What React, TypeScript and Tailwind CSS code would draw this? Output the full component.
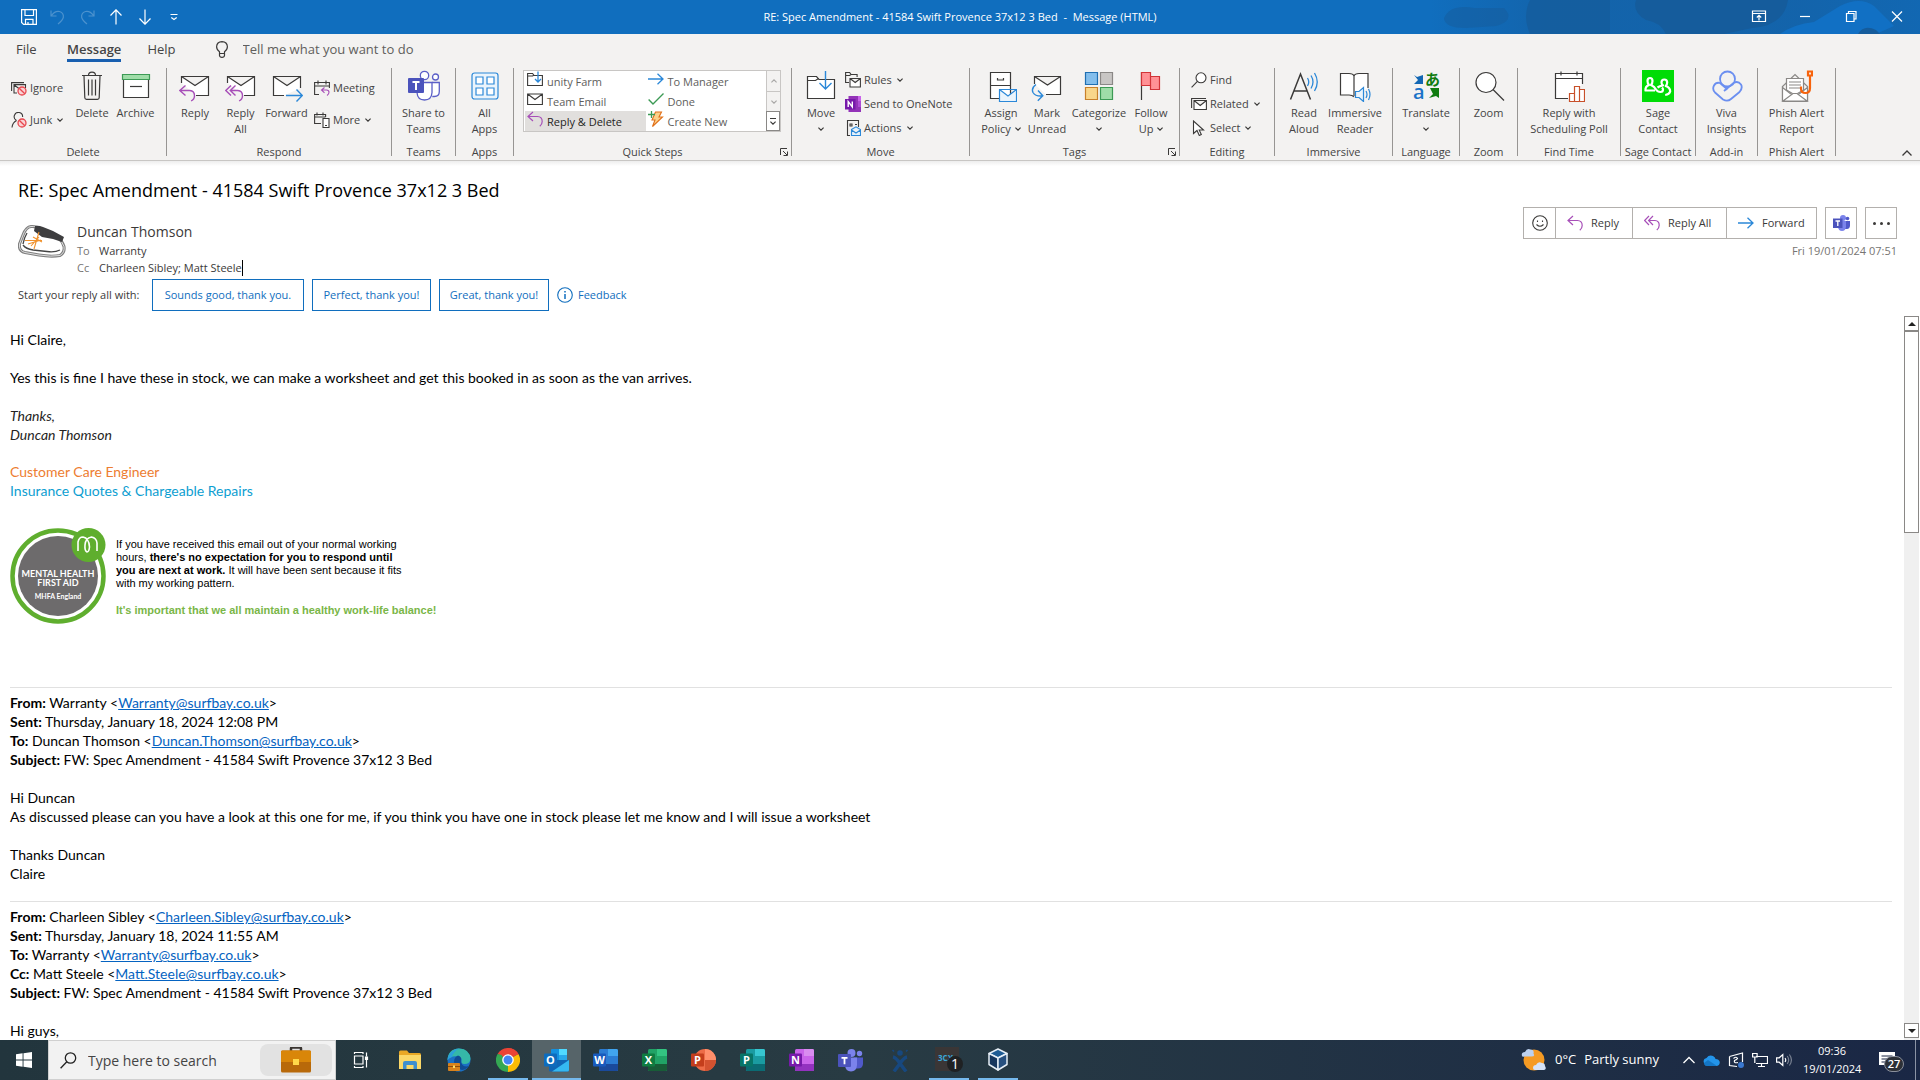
import type { ReactNode } from "react";

/* ---------- shared bits ---------- */

const INK = "#3b3a39";
const BLUE = "#2b88d8";
const PURPLE = "#a74fb8";

function Chevron({ className = "" }: { className?: string }) {
  return (
    <svg width="6" height="4" viewBox="0 0 6 4" className={className} fill="none" stroke={INK} strokeWidth="1.2">
      <path d="M0.4 0.6 3 3.1 5.6 0.6" />
    </svg>
  );
}

function Icon32({ children }: { children: ReactNode }) {
  return (
    <svg width="32" height="32" viewBox="0 0 32 32" fill="none" stroke={INK} strokeWidth="1.2" className="shrink-0">
      {children}
    </svg>
  );
}

function Icon16({ children }: { children: ReactNode }) {
  return (
    <svg width="16" height="16" viewBox="0 0 16 16" fill="none" stroke={INK} strokeWidth="1.1" className="shrink-0">
      {children}
    </svg>
  );
}

function NoSign({ x, y, r }: { x: number; y: number; r: number }) {
  return (
    <g stroke="#e8484f" strokeWidth="1.3">
      <circle cx={x} cy={y} r={r} fill="#f9d3d5" />
      <path d={`M${x - r * 0.7} ${y - r * 0.7} L${x + r * 0.7} ${y + r * 0.7}`} />
    </g>
  );
}

/* ---------- ribbon icons ---------- */

const IgnoreIcon = () => (
  <Icon16>
    <path d="M0.6 11V2.6H13" />
    <path d="M6 13H3V4.6h11.5V8M3.2 5l5.4 4 2-1.4" fill="none" />
    <NoSign x={11} y={11} r={4} />
  </Icon16>
);

const JunkIcon = () => (
  <Icon16>
    <path d="M5.5 8.4A4.2 4.2 0 1 1 11.6 5M1 15.5c.3-3.4 1.8-5.6 4.6-7" />
    <NoSign x={11} y={11} r={4} />
  </Icon16>
);

const TrashIcon = () => (
  <Icon32>
    <path d="M6 5.5h20M12.5 5.3c0-2.4 1-3.2 3.5-3.2s3.5.8 3.5 3.2M8 5.8l.8 22q.1 1.6 1.7 1.6h11q1.6 0 1.7-1.6l.8-22M12.5 9.5v16M16 9.5v16M19.5 9.5v16" />
  </Icon32>
);

const ArchiveIcon = () => (
  <Icon32>
    <path d="M3.5 9.5h25v18h-25z" fill="#fff" />
    <path d="M2.5 4.5h27v5h-27z" fill="#9fdda8" stroke="#3c9a55" />
    <path d="M10 16.5h12" />
  </Icon32>
);

const ReplyBigIcon = () => (
  <Icon32>
    <path d="M2.5 13V6.500h27v19H17M2.5 6.500 16 15.500l13.500-9" fill="#fff" />
    <path d="M6.500 15.500.8 20.500l5.700 5M.8 20.500h10q4.700.3 4.700 5.200 0 3.500-3.400 5.300" stroke={PURPLE} strokeWidth="1.4" />
  </Icon32>
);

const ReplyAllBigIcon = () => (
  <Icon32>
    <path d="M2.5 13V6.500h27v19H19M2.5 6.500 16 15.500l13.500-9" fill="#fff" />
    <path d="M6 15.500.8 20.500l5.200 5M10.500 15.500l-5.200 5 5.200 5M5.300 20.500h7.500q4.700.3 4.700 5.200 0 3.500-3.400 5.300" stroke={PURPLE} strokeWidth="1.4" />
  </Icon32>
);

const ForwardBigIcon = () => (
  <Icon32>
    <path d="M13 25.500H2.500v-19h27V18M2.500 6.500 16 15.500l13.500-9" fill="#fff" />
    <path d="M15 25.500h16M25.500 19.500l5.800 6-5.800 6" stroke={BLUE} strokeWidth="1.4" />
  </Icon32>
);

const MeetingIcon = () => (
  <Icon16>
    <path d="M5 14.500H.6v-12h14.800V8M.6 6h14.800M4 .5v4M12 .5v4" />
    <path d="M10.500 7.500 7.500 10l3 2.800M7.500 10h5q2.500 0 2.500 2.300 0 2-2 3.200" stroke={PURPLE} />
  </Icon16>
);

const MoreIcon = () => (
  <Icon16>
    <path d="M7 11.500H.6v-9h11V5M.6 5h11M3 .5v3M9 .5v3" />
    <path d="M9 6.500h6v9H9zM11 13.500h2" fill="#fff" />
  </Icon16>
);

const TeamsBigIcon = () => (
  <Icon32>
    <g stroke="#5b5fc7" strokeWidth="1.3">
      <circle cx="16.5" cy="5.5" r="4.2" fill="#fff" />
      <circle cx="27.5" cy="7" r="3" fill="#fff" />
      <path d="M24 12.500h7.300v9q0 5-5 5h-2" fill="#fff" />
      <path d="M9 12.500h15v10q-.5 7.500-7.500 7.500T9 22.500z" fill="#fff" />
    </g>
    <rect x="0" y="8" width="16" height="15" rx="1" fill="#4b53bc" stroke="none" />
    <path d="M4.500 12h7M8 12v8" stroke="#fff" strokeWidth="2" />
  </Icon32>
);

const AppsIcon = () => (
  <Icon32>
    <g stroke={BLUE}>
      <rect x="3" y="3" width="26" height="26" rx="2.5" fill="#eaf4fc" />
      <path d="M7 7h7v7H7zM18 7h7v7h-7zM7 18h7v7H7zM18 18h7v7h-7z" fill="#fff" />
    </g>
  </Icon32>
);

const FolderMoveIcon = () => (
  <Icon32>
    <path d="M2.500 28.500v-22h9l2.500 3h15.500v19z" fill="#fff" />
    <path d="M2.500 10.500h8l3-2" />
    <path d="M20.500 1v17.500M14.500 13l6 6 6-6" stroke={BLUE} strokeWidth="1.4" />
  </Icon32>
);

const FolderSmallIcon = () => (
  <Icon16>
    <path d="M.6 14.500v-12h5l1.500 2h8.300v10zM.6 5h5l1.500-1" fill="#fff" />
    <path d="M11 .5v10M8 8l3 3 3-3" stroke={BLUE} strokeWidth="1.3" />
  </Icon16>
);

const EnvelopeSmallIcon = () => (
  <Icon16>
    <path d="M.6 3h14.800v10.500H.6zM.6 3 8 8.500 15.400 3" fill="#fff" />
  </Icon16>
);

function ReplyGlyph() {
  return (
    <svg width="16" height="16" viewBox="0 0 16 16" fill="none" stroke={PURPLE} strokeWidth="1.2" className="shrink-0">
      <path d="M6 1 1 5.500l5 4.500M1 5.500h9.500q4.700.2 4.700 5 0 2.800-2.400 4.700" />
    </svg>
  );
}

function ReplyAllGlyph() {
  return (
    <svg width="16" height="16" viewBox="0 0 16 16" fill="none" stroke={PURPLE} strokeWidth="1.2" className="shrink-0">
      <path d="M5 1 .6 5.500 5 10M9 1 4.600 5.500 9 10M4.600 5.500H11q4.200.2 4.200 4.800 0 2.800-2.400 4.700" />
    </svg>
  );
}

function ArrowGlyph() {
  return (
    <svg width="16" height="16" viewBox="0 0 16 16" fill="none" stroke={BLUE} strokeWidth="1.3" className="shrink-0">
      <path d="M0 8h15M9.500 2.800 15 8l-5.500 5.200" />
    </svg>
  );
}

const CheckIcon = () => (
  <Icon16>
    <path d="M.6 8.500 5 13 15.500 2.500" stroke="#3c9a55" strokeWidth="1.4" />
  </Icon16>
);

const BoltIcon = () => (
  <Icon16>
    <path d="M7.500 1h6L11 6h3.500L4.500 15.500 7 9H4z" fill="#fbd18a" stroke="#e0701a" />
    <path d="M3.500 0v7M0 3.500h7" stroke="#3c9a55" strokeWidth="1.3" />
  </Icon16>
);

const RulesIcon = () => (
  <Icon16>
    <path d="M4 10.500H.6v-10h4l1.500 2h6V5M.6 3.500h4l1.500-1" />
    <path d="M5 6.500h10.400v8.500H5zM5 6.500l5.200 4 5.200-4" fill="#fff" />
  </Icon16>
);

const OneNoteIcon = () => (
  <svg width="16" height="16" viewBox="0 0 16 16" className="shrink-0">
    <path d="M3.500 0H16v16H3.500z" fill="#9333b8" />
    <path d="M13 0h3v5h-3z" fill="#ca64ea" />
    <path d="M13 5h3v6h-3z" fill="#ae4bd5" />
    <path d="M0 3h10.500v10.500H0z" fill="#7719aa" />
    <path d="M3.200 11V5.500L7.300 11V5.500" fill="none" stroke="#fff" strokeWidth="1.4" />
  </svg>
);

const ActionsIcon = () => (
  <Icon16>
    <path d="M5 15.500H2.500V.5h11V7M5 4h2v2H5zM10 4.500h2" />
    <path d="M6.500 9.500 11 6.800l4.500 2.700v6h-9zM6.500 10l4.500 3 4.500-3" fill="#e3f1fc" stroke={BLUE} />
  </Icon16>
);

const AssignIcon = () => (
  <Icon32>
    <path d="M5.500 2.500h20v26h-20zM5.500 15.500h20M12.500 8v2h6V8" fill="#fff" />
    <path d="M14.500 19.500h17v12h-17zM14.500 19.500 23 26l8.500-6.500" fill="#eaf4fc" stroke={BLUE} />
  </Icon32>
);

const UnreadIcon = () => (
  <Icon32>
    <path d="M3.500 14V6.500h26v18H15M3.500 6.500 16.500 15l13-8.500" fill="#fff" />
    <path d="M5 14.500q-5 3.500-3 8 2.500 4 9 3.500M7 20.500l4.800 5.300-5 5" stroke={BLUE} strokeWidth="1.4" />
  </Icon32>
);

const CategorizeIcon = () => (
  <Icon32>
    <path d="M2.500 2.500h12v12h-12z" fill="#83beec" stroke="#1f6fb2" />
    <path d="M17.500 2.500h12v12h-12z" fill="#c8c6c4" stroke="#8a8886" />
    <path d="M2.500 17.500h12v12h-12z" fill="#f9d68a" stroke="#c8802a" />
    <path d="M17.500 17.500h12v12h-12z" fill="#9fdda8" stroke="#3c9a55" />
  </Icon32>
);

const FlagIcon = () => (
  <Icon32>
    <path d="M6.500 2v28" />
    <path d="M6.500 2.500h9v4h9v13h-9v-4h-9z" fill="#ff9195" stroke="#d13438" />
    <path d="M15.500 6.500v9" stroke="#d13438" />
  </Icon32>
);

const FindIcon = () => (
  <Icon16>
    <circle cx="10" cy="5.8" r="5" fill="#fff" />
    <path d="M6.400 9.400.6 15.300" />
  </Icon16>
);

const RelatedIcon = () => (
  <Icon16>
    <path d="M.6 12V2.500H15" />
    <path d="M3 4.500h12.400V13.500H3zM3 4.500l6.200 5 6.200-5" fill="#fff" />
  </Icon16>
);

const SelectIcon = () => (
  <Icon16>
    <path d="M2.500 1v12.500L6 10.500l2.300 5 2-1L8.200 10H12.500z" fill="#fff" />
  </Icon16>
);

const ReadAloudIcon = () => (
  <Icon32>
    <path d="M2.500 29.500 12.500 4l10 25.500M6 21h13" strokeWidth="1.5" />
    <path d="M19.500 8q2.500 4 0 8M23 5.500q4 6.500 0 13M26.500 3q5.500 9 0 18" stroke={BLUE} strokeWidth="1.3" />
  </Icon32>
);

const ReaderIcon = () => (
  <Icon32>
    <path d="M15 27q-1.500-2-5-2H1.500V3.500H10q4 0 5 2.500 1-2.500 5-2.500h9V18M15 6v20" fill="#fff" />
    <path d="M16.500 21.500h3.500l4.500-4v14l-4.500-4h-3.500z" fill="#eaf4fc" stroke={BLUE} />
    <path d="M27 21q2 3.500 0 7M29.500 19q3 5.500 0 11" stroke={BLUE} />
  </Icon32>
);

const TranslateIcon = () => (
  <svg width="32" height="32" viewBox="0 0 32 32" className="shrink-0 overflow-visible">
    <path d="M4 5l3 2 6-2v9H4l4-4z" fill="#1267b4" />
    <path d="M29 18v10l-3-2-7 2 4-4-3-6z" fill="#107c10" />
    <text x="3" y="29" fontSize="20" fontWeight="600" fill="#1a73c8" fontFamily="'Open Sans', sans-serif">a</text>
    <text x="15" y="15" fontSize="15" fontWeight="700" fill="#107c10" fontFamily="'Noto Sans CJK JP', sans-serif">あ</text>
  </svg>
);

const ZoomIcon = () => (
  <Icon32>
    <circle cx="13" cy="12.5" r="10" fill="#fff" />
    <path d="m20 19.500 11 11" />
  </Icon32>
);

const PollIcon = () => (
  <Icon32>
    <path d="M15 28.500H2.500v-25h27V14M2.500 8.500h27M8 1.500v4M24 1.500v4" fill="#fff" />
    <path d="M16.500 31.500v-8h5v8zM21.500 31.500v-15h5v15zM26.500 31.500v-12h5v12z" fill="#fff" stroke="#c8502a" />
  </Icon32>
);

const SageIcon = () => (
  <svg width="32" height="32" viewBox="0 0 32 32" className="shrink-0" fill="none" stroke="#fff" strokeWidth="2.2" strokeLinejoin="round">
    <rect width="32" height="32" fill="#00dc06" stroke="none" />
    <path d="M13 20.500H3.500q-.5-4 3.500-5.500-1.500-1.500-1.500-4 0-3 2.500-3t2.500 3q0 2.500-1.500 4 3.500 1.500 5 4.500 1.500 2.500 4.500 2.500 2.500 0 2.500-2.500 0-1-1-2" />
    <path d="M15.500 17.500q2-1.500 5.500-2-1.500-1-1.500-3 0-3 2.800-3t2.900 3q0 2-1.500 3.500 4.500 1.500 4.500 5.500-1 3-5 3.500" />
  </svg>
);

const VivaIcon = () => (
  <Icon32>
    <g stroke="#6b8ff0" strokeWidth="1.8">
      <circle cx="16.5" cy="9" r="7.5" />
      <path d="M9 13q-4-1-6 2.500-2 3.800 1 7L12 29.500q4.500 2.500 8-.5l8.500-7q3.500-4 1.500-7.500-3-4-7.500-1.500L13 21M9 13l7.500 6.500" />
    </g>
  </Icon32>
);

const PhishIcon = () => (
  <Icon32>
    <g stroke="#8a8886" fill="#fff">
      <path d="M1.500 31.500v-15L14 4.500l12.500 12v15z" fill="#f3f2f1" />
      <path d="M5.500 20V8.500h17V20L14 25z" />
      <path d="M8 12h12M8 15h12M8 18h12" />
      <path d="M1.500 31.500v-14l9 7M26.500 31.500v-14l-9 7M2 31l10-7.500h4l10 7.500z" />
    </g>
    <path d="M27 1.500h4v4h-4zM29 5.500v12.500q0 5-4.500 5T20 18.500v-2" stroke="#f7630c" strokeWidth="2.2" />
  </Icon32>
);

/* ---------- ribbon building blocks ---------- */

function BigButton({ icon, label, className, chevron = "none" }: {
  icon: ReactNode;
  label: string[];
  className: string;
  chevron?: "none" | "inline" | "below";
}) {
  return (
    <button type="button" className={`flex flex-col items-center pt-0.5 whitespace-nowrap ${className}`}>
      {icon}
      <span className="mt-[3px] text-center leading-4">
        {label.map((line, i) => (
          <span key={line} className="flex items-center justify-center gap-1">
            {line}
            {chevron === "inline" && i === label.length - 1 && <Chevron />}
          </span>
        ))}
        {chevron === "below" && (
          <span className="flex h-4 items-center justify-center"><Chevron /></span>
        )}
      </span>
    </button>
  );
}

function SmallButton({ icon, label, chevron = false, tall = false }: {
  icon: ReactNode;
  label: string;
  chevron?: boolean;
  tall?: boolean;
}) {
  return (
    <button type="button" className={`flex items-center gap-[3px] whitespace-nowrap ${tall ? "h-8" : "h-6"}`}>
      {icon}
      <span>{label}</span>
      {chevron && <Chevron className="ml-0.5" />}
    </button>
  );
}

function Group({ name, width, children, launcher = false }: {
  name: string;
  width: string;
  children: ReactNode;
  launcher?: boolean;
}) {
  return (
    <>
      <section aria-label={name} className={`flex shrink-0 flex-col ${width}`}>
        <div className="flex h-[76px] items-start">{children}</div>
        <div className="relative text-center leading-4 whitespace-nowrap">
          {name}
          {launcher && (
            <button type="button" aria-label={`${name} options`} className="absolute top-1 right-[3px]">
              <svg width="8" height="8" viewBox="0 0 8 8" fill="none" stroke={INK}>
                <path d="M.5 7V.5H7M3 3l4 4M7.500 3.500v4h-4" />
              </svg>
            </button>
          )}
        </div>
      </section>
      <div className="h-[88px] w-px shrink-0 bg-[#979593]" />
    </>
  );
}

function QuickStep({ icon, label, active = false }: { icon: ReactNode; label: string; active?: boolean }) {
  return (
    <button type="button" className={`flex h-5 items-start gap-1 pl-0.5 ${active ? "bg-[#e1dfdd] text-[#252423]" : ""}`}>
      {icon}
      <span className="leading-[22px]">{label}</span>
    </button>
  );
}

function Ribbon() {
  return (
    <div className="flex h-[92px] text-[11px] text-[#444]">
      <Group name="Delete" width="w-[166px]">
        <div className="ml-[11px] flex w-[66px] shrink-0 flex-col pt-1">
          <SmallButton tall icon={<IgnoreIcon />} label="Ignore" />
          <SmallButton tall icon={<JunkIcon />} label="Junk" chevron />
        </div>
        <BigButton className="w-[30px]" icon={<TrashIcon />} label={["Delete"]} />
        <BigButton className="w-[57px]" icon={<ArchiveIcon />} label={["Archive"]} />
      </Group>
      <Group name="Respond" width="w-[224px]">
        <BigButton className="ml-[5px] w-[46px]" icon={<ReplyBigIcon />} label={["Reply"]} />
        <BigButton className="w-[45px]" icon={<ReplyAllBigIcon />} label={["Reply", "All"]} />
        <BigButton className="w-[47px]" icon={<ForwardBigIcon />} label={["Forward"]} />
        <div className="ml-1 flex flex-col pt-1">
          <SmallButton tall icon={<MeetingIcon />} label="Meeting" />
          <SmallButton tall icon={<MoreIcon />} label="More" chevron />
        </div>
      </Group>
      <Group name="Teams" width="w-[63px]">
        <BigButton className="w-full" icon={<TeamsBigIcon />} label={["Share to", "Teams"]} />
      </Group>
      <Group name="Apps" width="w-[57px]">
        <BigButton className="w-full" icon={<AppsIcon />} label={["All", "Apps"]} />
      </Group>
      <Group name="Quick Steps" width="w-[277px]" launcher>
        <div className="mt-0.5 ml-[9px] flex border border-[#c8c6c4] bg-white text-[#605e5c]">
          <div className="grid w-[242px] grid-cols-2 pl-px">
            <QuickStep icon={<FolderSmallIcon />} label="unity Farm" />
            <QuickStep icon={<ArrowGlyph />} label="To Manager" />
            <QuickStep icon={<EnvelopeSmallIcon />} label="Team Email" />
            <QuickStep icon={<CheckIcon />} label="Done" />
            <QuickStep icon={<ReplyGlyph />} label="Reply & Delete" active />
            <QuickStep icon={<BoltIcon />} label="Create New" />
          </div>
          <div className="flex w-3.5 flex-col">
            <button type="button" aria-label="Previous row" className="flex h-5 items-center justify-center border-l border-[#c8c6c4] bg-[#f3f2f1]">
              <Chevron className="rotate-180 opacity-40" />
            </button>
            <button type="button" aria-label="Next row" className="flex h-5 items-center justify-center border-t border-l border-[#c8c6c4] bg-[#f3f2f1]">
              <Chevron className="opacity-40" />
            </button>
            <button type="button" aria-label="More quick steps" className="flex h-5 flex-col items-center justify-center gap-0.5 border border-[#8a8886]">
              <span className="h-px w-1.5 bg-[#3b3a39]" />
              <Chevron />
            </button>
          </div>
        </div>
      </Group>
      <Group name="Move" width="w-[177px]">
        <BigButton className="ml-1.5 w-[46px]" icon={<FolderMoveIcon />} label={["Move"]} chevron="below" />
        <div className="ml-px flex flex-col">
          <SmallButton icon={<RulesIcon />} label="Rules" chevron />
          <SmallButton icon={<OneNoteIcon />} label="Send to OneNote" />
          <SmallButton icon={<ActionsIcon />} label="Actions" chevron />
        </div>
      </Group>
      <Group name="Tags" width="w-[209px]" launcher>
        <BigButton className="ml-2 w-[46px]" icon={<AssignIcon />} label={["Assign", "Policy"]} chevron="inline" />
        <BigButton className="w-[46px]" icon={<UnreadIcon />} label={["Mark", "Unread"]} />
        <BigButton className="w-[58px]" icon={<CategorizeIcon />} label={["Categorize"]} chevron="below" />
        <BigButton className="w-[46px]" icon={<FlagIcon />} label={["Follow", "Up"]} chevron="inline" />
      </Group>
      <Group name="Editing" width="w-[94px]">
        <div className="ml-[11px] flex flex-col">
          <SmallButton icon={<FindIcon />} label="Find" />
          <SmallButton icon={<RelatedIcon />} label="Related" chevron />
          <SmallButton icon={<SelectIcon />} label="Select" chevron />
        </div>
      </Group>
      <Group name="Immersive" width="w-[117px]">
        <BigButton className="ml-[5px] w-12" icon={<ReadAloudIcon />} label={["Read", "Aloud"]} />
        <BigButton className="w-[54px]" icon={<ReaderIcon />} label={["Immersive", "Reader"]} />
      </Group>
      <Group name="Language" width="w-[66px]">
        <BigButton className="w-full" icon={<TranslateIcon />} label={["Translate"]} chevron="below" />
      </Group>
      <Group name="Zoom" width="w-[57px]">
        <BigButton className="w-full" icon={<ZoomIcon />} label={["Zoom"]} />
      </Group>
      <Group name="Find Time" width="w-[102px]">
        <BigButton className="w-full" icon={<PollIcon />} label={["Reply with", "Scheduling Poll"]} />
      </Group>
      <Group name="Sage Contact" width="w-[74px]">
        <BigButton className="w-full" icon={<SageIcon />} label={["Sage", "Contact"]} />
      </Group>
      <Group name="Add-in" width="w-[61px]">
        <BigButton className="w-full" icon={<VivaIcon />} label={["Viva", "Insights"]} />
      </Group>
      <Group name="Phish Alert" width="w-[77px]">
        <BigButton className="w-full" icon={<PhishIcon />} label={["Phish Alert", "Report"]} />
      </Group>
      <button type="button" aria-label="Collapse the ribbon" className="mr-2 mb-1 ml-auto self-end">
        <svg width="10" height="6" viewBox="0 0 10 6" fill="none" stroke={INK} strokeWidth="1.3">
          <path d="M.5 5.500 5 1l4.500 4.500" />
        </svg>
      </button>
    </div>
  );
}

/* ---------- title bar ---------- */

function BarButton({ label, children, wide = false }: { label: string; children: ReactNode; wide?: boolean }) {
  return (
    <button type="button" aria-label={label} className={`flex items-center justify-center ${wide ? "w-[46px] pb-0.5" : "w-[29px]"}`}>
      <svg width="16" height="16" viewBox="0 0 16 16" fill="none" stroke="#fff" strokeWidth="1.2">{children}</svg>
    </button>
  );
}

function TitleBar() {
  return (
    <header className="relative grid h-[34px] shrink-0 grid-cols-[1fr_auto_1fr] bg-[#106ebe] text-white">
      <svg className="absolute top-0 right-0" width="490" height="34" viewBox="0 0 490 34">
        <defs>
          <linearGradient id="fade" x1="0" x2="1" y1="0" y2="0">
            <stop offset="0" stopColor="#1461a6" stopOpacity="0" />
            <stop offset=".25" stopColor="#1461a6" stopOpacity=".8" />
            <stop offset=".75" stopColor="#1461a6" stopOpacity=".8" />
            <stop offset="1" stopColor="#1461a6" stopOpacity=".5" />
          </linearGradient>
        </defs>
        <path d="M0 0h490v34H0z" fill="url(#fade)" />
        <path d="M14 18q6-14 30-10h30q12 12-8 18l-30 2q-22 0-22-10z" fill="#155c9c" opacity=".5" />
        <path d="M100 0h80v34h-80q-8-18 0-34z" fill="#155c9c" opacity=".8" />
        <path d="M206 0h152q-4 26-36 28l-28 6h-58q-6-12-20-14-14-8-10-20z" fill="#155c9c" />
        <path d="M350 34q14-10 34-12l26-16q20-10 34 0l20 20-18 8z" fill="#1170c4" />
        <path d="M428 34q6-10 18-4l4 4z" fill="#155c9c" />
      </svg>
      <div className="relative flex pl-3.5">
        <BarButton label="Save">
          <path d="M.6.6h14.800v14.800H2.600l-2-2zM4 .6V6.500h8.500V.6M4.500 15.400v-5h7.500v5M7 13v2" />
        </BarButton>
        <BarButton label="Undo">
          <path d="M1 1.500v5.500h5.500M1.500 6.500Q5 1.500 9.500 2.500q4.500 1.500 3.800 6-.8 3-5.300 6.500" opacity=".25" />
        </BarButton>
        <BarButton label="Redo">
          <path d="M15 1.500v5.500H9.500M14.500 6.500Q11 1.500 6.500 2.500 2 4 2.700 8.500 3.500 11.500 8 15" opacity=".25" />
        </BarButton>
        <BarButton label="Previous item"><path d="M8 15.500V.8M2.500 6.500 8 .8l5.500 5.700" /></BarButton>
        <BarButton label="Next item"><path d="M8 .5v14.700M2.500 9.500 8 15.200l5.500-5.700" /></BarButton>
        <BarButton label="Customize Quick Access Toolbar"><path d="M4.500 5.500h7M5.300 8.500l2.700 2 2.700-2" /></BarButton>
      </div>
      <h1 className="relative self-center text-[11px] leading-4">
        RE: Spec Amendment - 41584 Swift Provence 37x12 3 Bed&nbsp; -&nbsp; Message (HTML)
      </h1>
      <div className="relative flex justify-end">
        <BarButton label="Ribbon Display Options" wide>
          <path d="M1.500 3h13v10.500h-13zM1.500 5.500h13M8 12.500v-5M5.800 9.500 8 7.300l2.200 2.200" />
        </BarButton>
        <BarButton label="Minimize" wide><path d="M3 8.500h10" /></BarButton>
        <BarButton label="Restore" wide><path d="M3.500 5.500h7.500v8H3.500zM5.500 5V3.500H13V11h-1.500" /></BarButton>
        <BarButton label="Close" wide><path d="m3 3.500 10 10M13 3.500l-10 10" /></BarButton>
      </div>
    </header>
  );
}

function Tabs() {
  return (
    <nav className="flex h-[34px] items-start pt-[5px] pl-4 text-[13px] leading-5 text-[#444]">
      <button type="button" className="w-[51px] text-left">File</button>
      <button type="button" className="border-b-3 border-[#185fb0] font-semibold">Message</button>
      <button type="button" className="ml-[26px]">Help</button>
      <label className="ml-10 flex items-center">
        <svg width="12" height="17" viewBox="0 0 12 17" fill="none" stroke={INK} strokeWidth="1.2">
          <path d="M3.500 12.500v-1.800Q.6 8.800.6 5.800.8.8 6 .6q5.200.2 5.400 5.200 0 3-2.900 4.900v1.800zM3.500 12.500v2q.2 1.900 2.500 1.900t2.500-1.900v-2" />
        </svg>
        <input
          aria-label="Tell me what you want to do"
          placeholder="Tell me what you want to do"
          className="ml-[15px] w-56 bg-transparent outline-none placeholder:text-[#605e5c]"
        />
      </label>
    </nav>
  );
}

/* ---------- message header ---------- */

function Avatar() {
  return (
    <svg width="48" height="34" viewBox="0 0 48 34" fill="none" className="shrink-0">
      <path d="M13 2.500Q8 3 5 11l-3.500 9Q.5 27 7 28.500l14 2.500q12 2 21 .5 5-3 4-9Q44 16 38 12L26 6Q18 2 13 2.500z" fill="#fff" stroke="#7f7f7f" strokeWidth="3" />
      <path d="M13 2.500Q8 3 5 11l-3.500 9Q.5 27 7 28.500l14 2.500q12 2 21 .5 5-3 4-9Q44 16 38 12L26 6Q18 2 13 2.500z" stroke="#dedede" strokeWidth="1" />
      <path d="M17 2q3-1 8 1l10 4 11 6-2 5-9-3-11-2-8-6z" fill="#3d3d3f" />
      <path d="M5 21q3 4 10 5l14 1.500q8 1 13-1.500M9 9q-3 5-4 11" stroke="#444" strokeWidth="1.3" />
      <path d="M7 16.500h17M21 8l-5 17M15 13l9 5M10 20l13-4M13 22l8-9" stroke="#f0922e" strokeWidth="1.1" />
    </svg>
  );
}

const SUGGESTIONS = [
  { text: "Sounds good, thank you.", width: "w-[152px]" },
  { text: "Perfect, thank you!", width: "w-[119px]" },
  { text: "Great, thank you!", width: "w-[110px]" },
];

function MessageHeader() {
  const cell = "flex h-full items-center border-r border-[#b3b0ad]";
  return (
    <div className="shrink-0 border-t border-[#c8c6c4] bg-linear-to-b from-[#ededed] to-white to-[5px] pt-4 pr-[23px] pl-[18px]">
      <h2 className="text-lg leading-[26px] text-black">RE: Spec Amendment - 41584 Swift Provence 37x12 3 Bed</h2>
      <div className="mt-1 flex items-start justify-between">
        <div className="flex pt-[15px]">
          <div className="w-[59px] pt-0.5"><Avatar /></div>
          <div className="text-[11px] leading-4 text-[#3b3a39]">
            <p className="text-sm leading-5">Duncan Thomson</p>
            <p className="mt-px flex"><span className="w-[22px] text-[#767472]">To</span>Warranty</p>
            <p className="mt-px flex">
              <span className="w-[22px] text-[#767472]">Cc</span>Charleen Sibley; Matt Steele
              <span className="w-px bg-black" />
            </p>
          </div>
        </div>
        <div className="flex flex-col items-end text-[11px] text-[#3b3a39]">
          <div className="flex h-8 gap-2">
            <div className="flex border border-r-0 border-[#b3b0ad]">
              <button type="button" aria-label="Add a reaction" className={`${cell} w-8 justify-center`}>
                <Icon16>
                  <circle cx="8" cy="8" r="7.3" />
                  <path d="M4.500 9.500Q8 13 11.500 9.500M5.500 5.500v1.500M10.500 5.500v1.500" />
                </Icon16>
              </button>
              <button type="button" className={`${cell} w-[77px] gap-2 pl-[11px]`}><ReplyGlyph />Reply</button>
              <button type="button" className={`${cell} w-[94px] gap-2 pl-[11px]`}><ReplyAllGlyph />Reply All</button>
              <button type="button" className={`${cell} w-[90px] gap-2 pl-[11px]`}><ArrowGlyph />Forward</button>
            </div>
            <button type="button" aria-label="Share to Teams" className="flex w-8 items-center justify-center border border-[#b3b0ad]">
              <svg width="17" height="16" viewBox="0 0 17 16">
                <circle cx="10" cy="3" r="3" fill="#7b83eb" />
                <circle cx="14.5" cy="3.5" r="1.8" fill="#5059c9" />
                <path d="M11 6h6v5q-.5 3-3 3h-3z" fill="#5059c9" />
                <path d="M5 6h8v6q-.5 4-4 4t-4-4z" fill="#7b83eb" />
                <path d="M0 3.500h9.500V13H0z" fill="#4b53bc" />
                <path d="M2.500 6h4.500M4.800 6v5" stroke="#fff" strokeWidth="1.3" />
              </svg>
            </button>
            <button type="button" aria-label="More actions" className="flex w-8 items-center justify-center gap-1 border border-[#b3b0ad]">
              <span className="size-[3px] rounded-full bg-[#3b3a39]" />
              <span className="size-[3px] rounded-full bg-[#3b3a39]" />
              <span className="size-[3px] rounded-full bg-[#3b3a39]" />
            </button>
          </div>
          <time className="mt-1 leading-4 text-[#767472]">Fri 19/01/2024 07:51</time>
        </div>
      </div>
      <div className="mt-[3px] flex h-8 items-center text-[11px]">
        <span className="w-[134px] text-[#3b3a39]">Start your reply all with:</span>
        <div className="flex h-full gap-2">
          {SUGGESTIONS.map((s) => (
            <button key={s.text} type="button" className={`border border-[#106ebe] text-[#106ebe] ${s.width}`}>{s.text}</button>
          ))}
          <button type="button" className="flex items-center gap-[5px] text-[#106ebe]">
            <svg width="16" height="16" viewBox="0 0 16 16" fill="none" stroke="#106ebe" strokeWidth="1.1">
              <circle cx="8" cy="8" r="7.3" />
              <path d="M8 7v5M8 4v1.500" strokeWidth="1.5" />
            </svg>
            Feedback
          </button>
        </div>
      </div>
    </div>
  );
}

/* ---------- message body ---------- */

function Mail({ address }: { address: string }) {
  return (
    <>
      &lt;<a href={`mailto:${address}`} className="text-[#0563c1] underline">{address}</a>&gt;
    </>
  );
}

function MhfaBadge() {
  return (
    <svg width="98" height="98" viewBox="0 0 98 98" className="shrink-0">
      <circle cx="48" cy="49" r="45.5" fill="#fff" stroke="#5fae2e" strokeWidth="4.5" />
      <circle cx="48" cy="49" r="40" fill="#6d6b6c" />
      <circle cx="78.5" cy="18" r="17" fill="#5fae2e" />
      <path d="M68 24V15q1-5 5-5 6 1 6.500 10-.5 5-2.500 5-2.500-1-2-7 .5-7 6.500-8 5 1 5.500 6v8" fill="none" stroke="#fff" strokeWidth="1.6" />
      <g fill="#fff" textAnchor="middle" fontFamily="Lato, sans-serif" fontWeight="700">
        <text x="48" y="50" fontSize="9">MENTAL HEALTH</text>
        <text x="48" y="59" fontSize="9">FIRST AID</text>
        <text x="48" y="72" fontSize="7">MHFA England</text>
      </g>
    </svg>
  );
}

function MessageBody() {
  return (
    <article className="min-w-0 flex-1 overflow-hidden pt-3.5 pr-3 pl-2.5 font-[Lato,sans-serif] text-sm leading-[19px] text-black">
      <p>Hi Claire,</p>
      <p className="mt-[19px]">Yes this is fine I have these in stock, we can make a worksheet and get this booked in as soon as the van arrives.</p>
      <p className="mt-[19px] text-[#252423] italic">Thanks,<br />Duncan Thomson</p>
      <p className="mt-[18px] text-[#ed7d31]">Customer Care Engineer</p>
      <p className="text-[#0d9ed1]">Insurance Quotes &amp; Chargeable Repairs</p>
      <div className="mt-[27px] flex gap-2">
        <MhfaBadge />
        <div className="pt-[11px] font-['Liberation_Sans',sans-serif] text-[11px] leading-[13px]">
          <p>
            If you have received this email out of your normal working<br />
            hours, <b>there's no expectation for you to respond until<br />
            you are next at work.</b> It will have been sent because it fits<br />
            with my working pattern.
          </p>
          <p className="mt-3.5 font-bold text-[#7ab648]">It's important that we all maintain a healthy work-life balance!</p>
        </div>
      </div>

      <hr className="mt-[62px] mb-[5px] border-[#e1e1e1]" />
      <p><b>From:</b> Warranty <Mail address="Warranty@surfbay.co.uk" /></p>
      <p><b>Sent:</b> Thursday, January 18, 2024 12:08 PM</p>
      <p><b>To:</b> Duncan Thomson <Mail address="Duncan.Thomson@surfbay.co.uk" /></p>
      <p><b>Subject:</b> FW: Spec Amendment - 41584 Swift Provence 37x12 3 Bed</p>
      <p className="mt-[19px]">Hi Duncan</p>
      <p>As discussed please can you have a look at this one for me, if you think you have one in stock please let me know and I will issue a worksheet</p>
      <p className="mt-[19px]">Thanks Duncan<br />Claire</p>

      <hr className="mt-[18px] mb-[5px] border-[#e1e1e1]" />
      <p><b>From:</b> Charleen Sibley <Mail address="Charleen.Sibley@surfbay.co.uk" /></p>
      <p><b>Sent:</b> Thursday, January 18, 2024 11:55 AM</p>
      <p><b>To:</b> Warranty <Mail address="Warranty@surfbay.co.uk" /></p>
      <p><b>Cc:</b> Matt Steele <Mail address="Matt.Steele@surfbay.co.uk" /></p>
      <p><b>Subject:</b> FW: Spec Amendment - 41584 Swift Provence 37x12 3 Bed</p>
      <p className="mt-[19px]">Hi guys,</p>
    </article>
  );
}

function ScrollBar() {
  return (
    <div className="mr-px flex w-[15px] shrink-0 flex-col bg-[#f0f0f0]">
      <button type="button" aria-label="Scroll up" className="flex h-[15px] items-center justify-center border border-[#8a8886] bg-white">
        <svg width="8" height="4" viewBox="0 0 8 4"><path d="M4 0 8 4H0z" fill="#222" /></svg>
      </button>
      <div className="h-[202px] border border-[#8a8886] bg-white" />
      <button type="button" aria-label="Scroll down" className="mt-auto mb-0.5 flex h-[15px] items-center justify-center border border-[#8a8886] bg-white">
        <svg width="8" height="4" viewBox="0 0 8 4"><path d="M4 4 0 0h8z" fill="#222" /></svg>
      </button>
    </div>
  );
}

/* ---------- taskbar ---------- */

function OfficeIcon({ letter, dark, mid, light, tile, round = false }: {
  letter: string;
  dark: string;
  mid: string;
  light: string;
  tile: string;
  round?: boolean;
}) {
  return (
    <svg width="25" height="22" viewBox="0 0 25 22">
      {round ? (
        <>
          <circle cx="14" cy="11" r="11" fill={mid} />
          <path d="M14 0a11 11 0 0 1 11 11H14z" fill={light} />
          <path d="M14 22a11 11 0 0 0 11-11H14z" fill={dark} />
        </>
      ) : (
        <>
          <rect x="6" width="19" height="22" rx="1.5" fill={mid} />
          <path d="M15 0h8.500Q25 0 25 1.500V7H15z" fill={light} />
          <path d="M6 15h19v5.500q0 1.500-1.500 1.500h-16Q6 22 6 20.500z" fill={dark} />
        </>
      )}
      <rect y="4.5" width="13" height="13" rx="1" fill={tile} />
      <text x="6.5" y="15" textAnchor="middle" fontSize="11" fontWeight="700" fill="#fff" fontFamily="'Open Sans', sans-serif">{letter}</text>
    </svg>
  );
}

const ExplorerIcon = () => (
  <svg width="22" height="20" viewBox="0 0 22 20">
    <path d="M0 2q0-1.500 1.500-1.500H8L10 3h10.500Q22 3 22 4.500V18H0z" fill="#e9a825" />
    <path d="M0 5h22v14H0z" fill="#fbd868" />
    <path d="M4 19v-6q0-2 2-2h10q2 0 2 2v6h-3.500v-4h-7v4z" fill="#3f8fd0" />
  </svg>
);

const EdgeIcon = () => (
  <svg width="24" height="24" viewBox="0 0 24 24">
    <circle cx="12" cy="12" r="11.5" fill="#1b6fc4" />
    <path d="M.5 12Q1 1 12 .5 23 1 23.500 11q-.5 5-6 5-4-.5-3-3 1-3-3-4.500Q4 7 .5 12z" fill="#35b8a8" />
    <path d="M.5 12Q2 2 12 .5 6 4 5 9q-3 1-4.500 3z" fill="#2aa0dc" />
    <path d="M14 12q1-3-3-4.500Q7 9 7 14q1 6 8 8 5-1 7-4-8 2-8-6z" fill="#104c94" />
    <rect x="1" y="15" width="12" height="8" rx="1" fill="#d8821c" />
    <path d="M1 18.500h12" stroke="#8a4a0c" />
    <rect x="6" y="17.5" width="2" height="2.5" fill="#ffd75e" />
  </svg>
);

const ChromeIcon = () => (
  <svg width="24" height="24" viewBox="0 0 24 24">
    <path d="M12 12 1.600 6A12 12 0 0 1 22.400 6z" fill="#ea4335" />
    <path d="M12 12 22.400 6A12 12 0 0 1 12 24z" fill="#fbbc04" />
    <path d="M12 12v12A12 12 0 0 1 1.600 6z" fill="#34a853" />
    <path d="M12 6.500h10.600A12 12 0 0 0 12 0z" fill="#ea4335" />
    <path d="M7.200 14.800 1.600 6l4 1 3.400 7z" fill="#34a853" />
    <circle cx="12" cy="12" r="5.8" fill="#fff" />
    <circle cx="12" cy="12" r="4.5" fill="#4285f4" />
  </svg>
);

const OutlookIcon = () => (
  <svg width="25" height="23" viewBox="0 0 25 23">
    <rect x="7" width="16" height="12" rx="1" fill="#1490df" />
    <path d="M15 0h8v6h-8z" fill="#50d9ff" />
    <path d="M15 6h8v5h-8z" fill="#28a8ea" />
    <path d="M5 11h20v10q0 1.500-1.500 1.500h-17Q5 22.500 5 21z" fill="#1066b5" />
    <path d="M25 11v10q0 1.500-1.500 1.500H8z" fill="#35b8f1" />
    <rect y="4.5" width="13" height="13" rx="1" fill="#0f6cbd" />
    <text x="6.5" y="15" textAnchor="middle" fontSize="11" fontWeight="700" fill="#fff" fontFamily="'Open Sans', sans-serif">O</text>
  </svg>
);

const TeamsIcon = () => (
  <svg width="25" height="23" viewBox="0 0 25 23">
    <circle cx="13.5" cy="4" r="4" fill="#7b83eb" />
    <circle cx="21.5" cy="4.5" r="2.7" fill="#7b83eb" />
    <path d="M16 8.500h9V15q-.5 4.500-5 4.500h-4z" fill="#5059c9" />
    <path d="M7 8.500h12V16q-.5 6.500-6 6.500T7 16z" fill="#7b83eb" />
    <rect y="5" width="13" height="13" rx="1" fill="#4b53bc" />
    <path d="M3.500 8.800h6M6.500 8.800v6.500" stroke="#fff" strokeWidth="1.8" />
  </svg>
);

const PersonXIcon = () => (
  <svg width="20" height="24" viewBox="0 0 20 24" fill="none" stroke="#17487f">
    <circle cx="10" cy="5" r="2.8" fill="#17487f" stroke="none" />
    <path d="M3 9q3 .5 7 6.500l6 8M17 9q-3 .5-7 6.500l-6 8" strokeWidth="3.5" />
    <path d="M4 3.500 2.500 2M16 3.500 17.500 2" strokeWidth="1.5" />
  </svg>
);

const PhoneAppIcon = () => (
  <svg width="32" height="28" viewBox="0 0 32 28">
    <rect x="2" y="1" width="24" height="24" fill="#3a3636" />
    <text x="5" y="15" fontSize="8" fontWeight="700" fill="#3aa6d8" fontFamily="'Open Sans', sans-serif">3CX</text>
    <circle cx="22" cy="18" r="8" fill="#1f2123" />
    <text x="22" y="23" textAnchor="middle" fontSize="14" fill="#fff" fontFamily="'Open Sans', sans-serif">1</text>
  </svg>
);

const CubeIcon = () => (
  <svg width="20" height="24" viewBox="0 0 20 24" stroke="#e6eef6" strokeWidth="1.5" strokeLinejoin="round">
    <path d="M10 1 19 5.500 10 10 1 5.500z" fill="#1e5b94" />
    <path d="M1 5.500v11l9 5.500V10z" fill="#17365d" />
    <path d="M19 5.500v11L10 22V10z" fill="#27507f" />
  </svg>
);

const TaskViewIcon = () => (
  <svg width="16" height="16" viewBox="0 0 16 16" fill="none" stroke="#fff" strokeWidth="1.2">
    <path d="M1.500 4h8.500v8H1.500zM1.500 2V.5H10V2M1.500 14v1.500H10V14M13.500.5v4M13.500 8v7.500" />
    <path d="M12.500 5h2v2.500h-2z" fill="#fff" />
  </svg>
);

const APPS: { name: string; icon: ReactNode; state?: "open" | "active" }[] = [
  { name: "Task View", icon: <TaskViewIcon /> },
  { name: "File Explorer", icon: <ExplorerIcon /> },
  { name: "Edge", icon: <EdgeIcon /> },
  { name: "Chrome", icon: <ChromeIcon />, state: "open" },
  { name: "Outlook", icon: <OutlookIcon />, state: "active" },
  { name: "Word", icon: <OfficeIcon letter="W" dark="#1a4a9c" mid="#2b7cd3" light="#41a5ee" tile="#185abd" /> },
  { name: "Excel", icon: <OfficeIcon letter="X" dark="#185c37" mid="#21a366" light="#33c481" tile="#107c41" /> },
  { name: "PowerPoint", icon: <OfficeIcon round letter="P" dark="#d35230" mid="#ed6c47" light="#ff8f6b" tile="#c43e1c" /> },
  { name: "Publisher", icon: <OfficeIcon letter="P" dark="#0b6b73" mid="#1a9ba1" light="#37c6d0" tile="#077568" /> },
  { name: "OneNote", icon: <OfficeIcon letter="N" dark="#9332bf" mid="#ca64ea" light="#d98cf0" tile="#7719aa" /> },
  { name: "Teams", icon: <TeamsIcon /> },
  { name: "Assistant", icon: <PersonXIcon /> },
  { name: "3CX", icon: <PhoneAppIcon />, state: "open" },
  { name: "VirtualBox", icon: <CubeIcon />, state: "open" },
];

function Tray({ children }: { children: ReactNode }) {
  return (
    <svg width="16" height="16" viewBox="0 0 16 16" fill="none" stroke="#fff" strokeWidth="1.2" className="shrink-0">
      {children}
    </svg>
  );
}

function Taskbar() {
  return (
    <footer className="flex h-10 shrink-0 items-stretch bg-linear-to-r from-[#22353d] via-[#283b43] via-45% to-[#1a2745] text-white">
      <button type="button" aria-label="Start" className="flex w-12 items-center justify-center">
        <svg width="16" height="16" viewBox="0 0 16 16" fill="#fff">
          <path d="M0 2.200 6.600 1.300v6.200H0zM7.500 1.200 16 0v7.500H7.500zM0 8.400h6.600v6.300L0 13.800zM7.500 8.400H16V16l-8.500-1.200z" />
        </svg>
      </button>
      <label className="flex w-72 items-center border border-[#d0d0d0] bg-[#f2f2f2] pl-[11px] text-[#333]">
        <svg width="17" height="17" viewBox="0 0 17 17" fill="none" stroke="#222" strokeWidth="1.3">
          <circle cx="10.5" cy="6" r="5.2" />
          <path d="M6.800 9.800.6 16.300" />
        </svg>
        <input aria-label="Search" placeholder="Type here to search" className="ml-[11px] w-[172px] bg-transparent pt-0.5 text-sm outline-none placeholder:text-[#444]" />
        <span className="flex h-8 w-[72px] items-center justify-center rounded-lg bg-[#e2e2e2]">
          <svg width="30" height="26" viewBox="0 0 30 26">
            <path d="M10 4V1.500Q10 .5 11 .5h8q1 0 1 1V4" fill="none" stroke="#3a3532" strokeWidth="2.5" />
            <rect y="3.5" width="30" height="22" rx="1.5" fill="#b8690a" />
            <path d="M0 4.500q0-1 1.500-1h27q1.500 0 1.500 1V15H0z" fill="#d98609" />
            <rect x="12" y="12" width="6" height="6" fill="#ffd84a" />
          </svg>
        </span>
      </label>
      <div className="flex">
        {APPS.map((app) => (
          <button
            key={app.name}
            type="button"
            aria-label={app.name}
            className={`flex w-[49px] flex-col items-center ${app.state === "active" ? "bg-[#566469]" : ""}`}
          >
            <span className="flex flex-1 items-center pt-0.5">{app.icon}</span>
            <span className={`h-0.5 ${app.state === "active" ? "w-full bg-[#76b9ed]" : app.state === "open" ? "w-10 bg-[#76b9ed]" : "w-10"}`} />
          </button>
        ))}
      </div>
      <div className="ml-auto flex items-center">
        <button type="button" className="flex items-center text-[13px] whitespace-nowrap">
          <svg width="26" height="24" viewBox="0 0 26 24" className="mr-2">
            <circle cx="13" cy="12" r="10.5" fill="#f59a23" />
            <path d="M1 8q-1-4 3-4Q6-.5 9.500 1.500q4 0 3 4 2 3-2 3H4Q1 9 1 8z" fill="#bcd0ee" />
            <path d="M12 20q0-3 3-3 2-4 6-2 3 0 3 3 2 3-1 4h-9q-2 0-2-2z" fill="#d5e2f7" />
          </svg>
          <span>0°C</span>
          <span className="ml-2">Partly sunny</span>
        </button>
        <div className="ml-6 flex items-center gap-2">
          <svg width="12" height="8" viewBox="0 0 12 8" fill="none" stroke="#fff" strokeWidth="1.3"><path d="M.5 7 6 1.500 11.500 7" /></svg>
          <svg width="17" height="11" viewBox="0 0 17 11">
            <path d="M1 8q-1.500-4 2.500-5Q6-.5 10 1q2.500 1.500 2.500 3Q16 4 16.800 7q0 3.500-3 4H4Q1.500 11 1 8z" fill="#2394ea" />
            <path d="M4 11q-3-.5-3-3l4-3 9 6z" fill="#0a62ad" opacity=".6" />
          </svg>
          <Tray>
            <path d="M1.500 4.500 14.500 1v9M1.500 4.500v9L9 14.500M5.500 6.500q3-2.500 4 0-.5 1-3 2-1 3 3.500 2" />
            <circle cx="13" cy="13" r="3" fill="#3a78d0" stroke="none" />
          </Tray>
          <Tray>
            <path d="M4 4.500h11.500v7H4M9.500 11.500v3M6 14.500h7M.6 1.500h4.500v3.500H.6zM2.800 5v6" />
          </Tray>
          <Tray>
            <path d="M.6 5.800h2.600L6.800 2.500v11L3.200 10.200H.6zM9 6q1.500 2 0 4" />
            <path d="M11.200 4q3 4 0 8M13.400 2.500q4 5.500 0 11" opacity=".4" />
          </Tray>
        </div>
        <time className="ml-[11px] w-[58px] text-center text-[11px] leading-[18px]">09:36<br />19/01/2024</time>
        <button type="button" aria-label="Notifications" className="relative mr-[11px] ml-[18px] h-6 w-[25px]">
          <svg width="16" height="16" viewBox="0 0 16 16" fill="#fff">
            <path d="M0 0h16v13H9l-3 3v-3H0z" />
            <path d="M2.500 4h11M2.500 7h11M2.500 10h6" stroke="#1a2745" strokeWidth="1.2" />
          </svg>
          <span className="absolute top-2 left-[5px] h-4 w-5 rounded-full border border-[#8a8f9c] bg-[#2c3037] text-center text-[11px] leading-[14px] font-semibold">27</span>
        </button>
        <div className="h-full w-[5px] border-l border-[#8b93a5]" />
      </div>
    </footer>
  );
}

export default function App() {
  return (
    <div className="flex h-screen flex-col overflow-hidden bg-white font-['Open_Sans','Noto_Sans',sans-serif]">
      <TitleBar />
      <div className="shrink-0 bg-[#f3f2f1]">
        <Tabs />
        <Ribbon />
      </div>
      <MessageHeader />
      <main className="mt-[5px] flex min-h-0 flex-1">
        <MessageBody />
        <ScrollBar />
      </main>
      <Taskbar />
    </div>
  );
}
